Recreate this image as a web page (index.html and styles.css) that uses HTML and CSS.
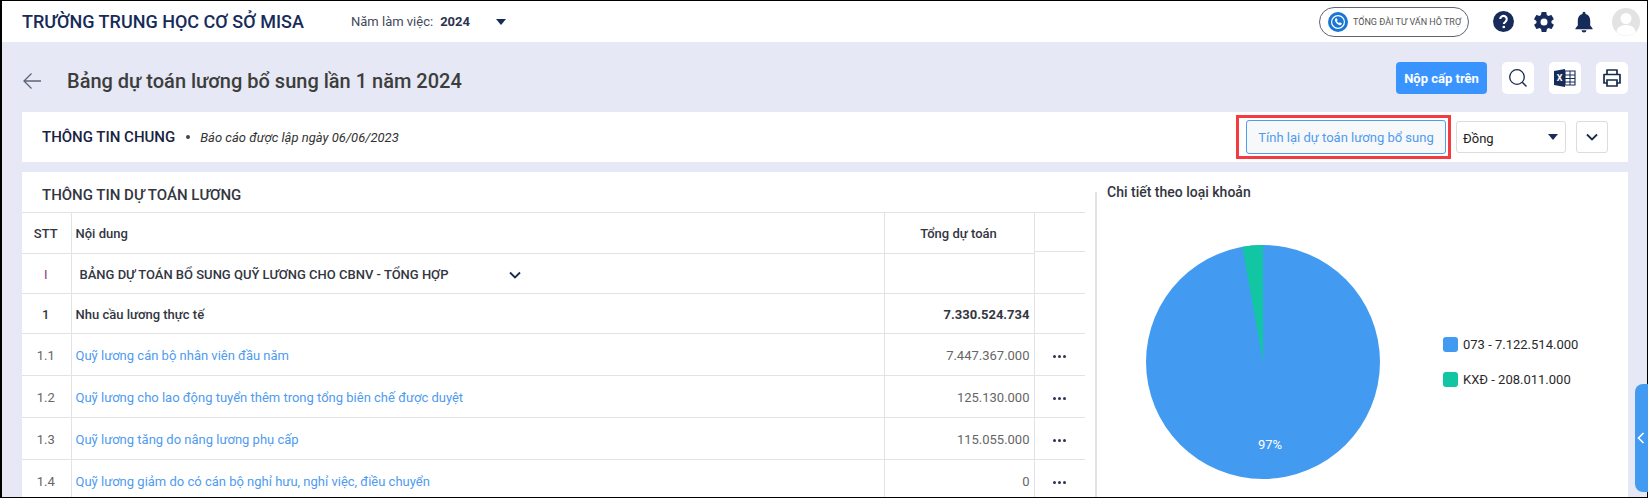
FILE: index.html
```html
<!DOCTYPE html>
<html lang="vi">
<head>
<meta charset="utf-8">
<title>Bảng dự toán lương bổ sung</title>
<link rel="stylesheet" href="styles.css">
</head>
<body>
<div class="frame">
  <header class="topbar">
    <div class="school">TRƯỜNG TRUNG HỌC CƠ SỞ MISA</div>
    <div class="year"><span class="year-label">Năm làm việc:</span><b class="year-value">2024</b><span class="caret year-caret"></span></div>
    <div class="top-actions">
      <div class="hotline">
        <svg class="hotline-icon" viewBox="0 0 20 20" width="20" height="20"><circle cx="10" cy="10" r="10" fill="#1976d2"/><circle cx="10" cy="10" r="7" fill="#fff"/><circle cx="10" cy="10" r="5.800" fill="#1976d2"/><path d="M7.500 6.600l1.200-.4 1 2-.8.7c.4 1 1.100 1.700 2.100 2.200l.8-.8 2 1-.4 1.300c-.2.600-.9.800-1.500.7-2.500-.5-4.500-2.500-5-5-.1-.7.100-1.400.600-1.700z" fill="#fff"/></svg>
        <span>TỔNG ĐÀI TƯ VẤN HỖ TRỢ</span>
      </div>
      <svg class="ic-help" viewBox="0 0 22 22" width="21" height="21"><circle cx="11" cy="11" r="11" fill="#172b5a"/><path d="M7.600 8.500a3.400 3.400 0 1 1 5.300 2.800c-1.100.7-1.500 1.200-1.500 2.300" fill="none" stroke="#fff" stroke-width="2.200"/><circle cx="11.300" cy="16.800" r="1.400" fill="#fff"/></svg>
      <svg class="ic-gear" viewBox="0 0 24 24" width="24" height="24"><path fill="#172b5a" fill-rule="evenodd" d="M19.400 13c.1-.3.100-.7.100-1s0-.7-.1-1l2.100-1.600c.2-.2.300-.4.100-.6l-2-3.500c-.1-.2-.4-.3-.6-.2l-2.500 1c-.5-.4-1.100-.7-1.700-1l-.4-2.600c0-.3-.2-.4-.5-.4h-4c-.3 0-.5.200-.5.400l-.4 2.600c-.6.300-1.200.6-1.700 1l-2.500-1c-.2-.1-.5 0-.6.200l-2 3.500c-.1.200-.1.500.1.600L4.500 11c0 .3-.1.700-.1 1s0 .7.100 1l-2.100 1.600c-.2.200-.3.400-.1.600l2 3.500c.1.200.4.300.6.200l2.500-1c.5.400 1.100.7 1.700 1l.4 2.600c0 .3.200.4.500.4h4c.3 0 .5-.2.500-.4l.4-2.600c.6-.3 1.200-.6 1.700-1l2.500 1c.2.100.5 0 .6-.2l2-3.500c.1-.2.100-.5-.1-.6zM12 15.500a3.500 3.500 0 1 1 0-7 3.500 3.500 0 0 1 0 7z"/></svg>
      <svg class="ic-bell" viewBox="0 0 24 24" width="24" height="24"><path fill="#172b5a" d="M12 22.500a2.500 2.500 0 0 0 2.500-2.300h-5a2.500 2.500 0 0 0 2.500 2.300zm8.500-4.300-2.300-2.600v-5c0-3.300-1.700-5.900-4.700-6.600v-.8a1.500 1.500 0 0 0-3 0v.8c-3 .7-4.700 3.300-4.700 6.600v5l-2.300 2.600v1h17z"/></svg>
      <svg class="avatar" viewBox="0 0 28 28" width="28" height="28"><circle cx="14" cy="14" r="14" fill="#e3e3e3"/><circle cx="14" cy="10.500" r="5.500" fill="#fff"/><path d="M4.500 24c.6-5 4.500-7 9.500-7s8.900 2 9.500 7a14 14 0 0 1-19 0z" fill="#fff"/></svg>
    </div>
  </header>

  <main class="page">
    <div class="page-head">
      <svg class="back" viewBox="0 0 20 18" width="20" height="18"><path d="M19 9H2M9.500 1.500 2 9l7.500 7.500" fill="none" stroke="#5d6478" stroke-width="1.300"/></svg>
      <h1 class="page-title">Bảng dự toán lương bổ sung lần 1 năm 2024</h1>
      <div class="head-actions">
        <button class="btn-primary">Nộp cấp trên</button>
        <div class="icon-btn"><svg viewBox="0 0 20 20" width="20" height="20"><circle cx="9" cy="9" r="7.300" fill="none" stroke="#172b4d" stroke-width="1.300"/><path d="M14.300 14.300 18.500 18.500" stroke="#172b4d" stroke-width="1.500"/></svg></div>
        <div class="icon-btn"><svg viewBox="0 0 22 18" width="22" height="18"><path d="M0 2l11-2v18L0 16z" fill="#172b5a"/><path d="M11 2h10v14H11z" fill="none" stroke="#172b5a" stroke-width="1.100"/><path d="M11 6h10M11 9.500h10M11 13h10M16 2v14" stroke="#172b5a" stroke-width="1"/><text x="5.500" y="12" class="xl">X</text></svg></div>
        <div class="icon-btn"><svg viewBox="0 0 20 20" width="20" height="20"><path d="M5 6V2h10v4M5 15H2V6.500h16V15h-3" fill="none" stroke="#172b4d" stroke-width="1.700" stroke-linejoin="round"/><path d="M5 12h10v6H5z" fill="none" stroke="#172b4d" stroke-width="1.700"/></svg></div>
      </div>
    </div>

    <section class="info-card">
      <span class="info-title">THÔNG TIN CHUNG</span>
      <span class="dot"></span>
      <span class="info-note">Báo cáo được lập ngày 06/06/2023</span>
      <div class="info-actions">
        <div class="highlight"><button class="btn-outline">Tính lại dự toán lương bổ sung</button></div>
        <div class="select"><span class="select-text">Đồng</span><span class="caret"></span></div>
        <div class="collapse"><svg viewBox="0 0 12 8" width="12" height="8"><path d="M1 1.500 6 6.500l5-5" fill="none" stroke="#172b4d" stroke-width="1.800"/></svg></div>
      </div>
    </section>

    <section class="main-card">
      <div class="table-side">
        <h2 class="table-title">THÔNG TIN DỰ TOÁN LƯƠNG</h2>
        <table class="grid">
          <colgroup><col class="c-stt"><col><col class="c-total"><col class="c-more"></colgroup>
          <thead>
            <tr class="r-head"><th class="center">STT</th><th class="left">Nội dung</th><th class="center">Tổng dự toán</th><th class="more-head"><div class="more-head-line"></div></th></tr>
          </thead>
          <tbody>
            <tr class="r-group"><td class="center roman">I</td><td><div class="group-cell"><span>BẢNG DỰ TOÁN BỔ SUNG QUỸ LƯƠNG CHO CBNV - TỔNG HỢP</span><svg viewBox="0 0 12 8" width="12" height="8"><path d="M1 1.500 6 6.500l5-5" fill="none" stroke="#172b4d" stroke-width="1.800"/></svg></div></td><td></td><td class="no-top"></td></tr>
            <tr class="r-bold"><td class="center">1</td><td>Nhu cầu lương thực tế</td><td class="num">7.330.524.734</td><td></td></tr>
            <tr class="r-item"><td class="center">1.1</td><td class="link">Quỹ lương cán bộ nhân viên đầu năm</td><td class="num">7.447.367.000</td><td class="more"><i></i><i></i><i></i></td></tr>
            <tr class="r-item"><td class="center">1.2</td><td class="link">Quỹ lương cho lao động tuyển thêm trong tổng biên chế được duyệt</td><td class="num">125.130.000</td><td class="more"><i></i><i></i><i></i></td></tr>
            <tr class="r-item"><td class="center">1.3</td><td class="link">Quỹ lương tăng do nâng lương phụ cấp</td><td class="num">115.055.000</td><td class="more"><i></i><i></i><i></i></td></tr>
            <tr class="r-item"><td class="center">1.4</td><td class="link">Quỹ lương giảm do có cán bộ nghỉ hưu, nghỉ việc, điều chuyển</td><td class="num">0</td><td class="more"><i></i><i></i><i></i></td></tr>
          </tbody>
        </table>
      </div>
      <aside class="chart-side">
        <h3 class="chart-title">Chi tiết theo loại khoản</h3>
        <div class="chart-body">
          <svg class="pie" viewBox="0 0 234 234" width="234" height="234">
            <circle cx="117" cy="117" r="117" fill="#429bf0"/>
            <path d="M117 117 96.300 1.800A117 117 0 0 1 117 0z" fill="#12c6a3"/>
            <text x="124" y="204" class="pie-label">97%</text>
          </svg>
          <ul class="legend">
            <li><span class="sw sw-blue"></span>073 - 7.122.514.000</li>
            <li><span class="sw sw-green"></span>KXĐ - 208.011.000</li>
          </ul>
        </div>
      </aside>
    </section>
  </main>
  <div class="side-tab"><svg viewBox="0 0 8 12" width="8" height="12"><path d="M6.500 1 1.500 6l5 5" fill="none" stroke="#fff" stroke-width="1.600"/></svg></div>
</div>
</body>
</html>
```
FILE: styles.css
```css
* { box-sizing: border-box; }
html, body { margin: 0; padding: 0; height: 100%; overflow: hidden; background: #fff; }
body { font-family: Roboto, "Liberation Sans", sans-serif; color: #3a3a3a; font-size: 13px; }
.frame { position: relative; width: 1648px; height: 498px; border: solid #000; border-width: 1px 1px 1px 2px; background: #e6e9f5; }

.topbar { height: 41px; background: #fff; display: flex; align-items: center; padding-left: 20px; }
.school { font-size: 18px; font-weight: 500; color: #172b5a; width: 329px; }
.year { display: flex; align-items: center; font-size: 13px; color: #44495a; }
.year-value { margin-left: 7px; color: #2b3350; font-weight: 700; }
.caret { display: inline-block; width: 0; height: 0; border: solid transparent; border-width: 6px 5.500px 0; border-top-color: #172b5a; }
.year-caret { margin-left: 26px; }
.top-actions { margin-left: auto; display: flex; align-items: center; padding-right: 7px; }
.hotline { display: flex; align-items: center; width: 150px; height: 30px; border: 1px solid #5d6478; border-radius: 15px; padding-left: 8px; font-size: 9px; color: #555; white-space: nowrap; }
.hotline-icon { margin-right: 5px; flex: none; }
.ic-help { margin-left: 24px; flex: none; }
.ic-gear { margin-left: 18px; flex: none; }
.ic-bell { margin-left: 16px; flex: none; }
.avatar { margin-left: 16px; flex: none; }

.page { padding: 0 19px 0 20px; }
.page-head { height: 70px; display: flex; align-items: center; }
.back { margin-top: 8px; flex: none; }
.page-title { margin: 8px 0 0 25px; font-size: 20px; font-weight: 500; color: #3d3d3d; }
.head-actions { margin: 2px 0 0 auto; display: flex; gap: 15px; align-items: center; }
.btn-primary { width: 91px; height: 32px; border: 0; border-radius: 4px; background: #3a94ff; color: #fff; font: 700 13px Roboto, sans-serif; padding: 0; }
.icon-btn { width: 32px; height: 32px; border-radius: 5px; background: #fff; display: flex; align-items: center; justify-content: center; }
.xl { fill: #fff; font: 700 9px Roboto, sans-serif; text-anchor: middle; }

.info-card { height: 50px; background: #fff; display: flex; align-items: center; padding-left: 20px; }
.info-title { font-size: 15px; font-weight: 500; color: #17233f; }
.dot { width: 4px; height: 4px; background: #445; border-radius: 50%; margin: 0 10px 0 11px; }
.info-note { font-size: 13px; font-style: italic; color: #333; }
.info-actions { margin-left: auto; display: flex; align-items: center; padding-right: 20px; }
.highlight { border: 3px solid #f43c40; padding: 2px 2px 2px 7px; }
.btn-outline { display: block; width: 200px; height: 34px; background: #f7f8fa; border: 1px solid #4f9bef; border-radius: 3px; color: #4f9bef; font: 400 13px Roboto, sans-serif; padding: 0; }
.select { width: 110px; height: 32px; border: 1px solid #dcdcdc; border-radius: 3px; margin-left: 5px; display: flex; align-items: center; justify-content: space-between; padding: 0 7px 0 6px; font-size: 13px; color: #222; background: #fff; }
.select-text { padding-top: 2px; }
.collapse { width: 32px; height: 32px; border: 1px solid #dcdcdc; border-radius: 3px; margin-left: 10px; display: flex; align-items: center; justify-content: center; }

.main-card { margin-top: 10px; height: 325px; background: #fff; display: flex; overflow: hidden; }
.table-side { width: 1063px; flex: none; }
.table-title { margin: 0; height: 40px; padding: 14px 0 0 20px; font-size: 15px; font-weight: 500; color: #33363f; line-height: 18px; }
.grid { width: 100%; table-layout: fixed; border-collapse: collapse; font-size: 13px; }
.c-stt { width: 49px; }
.c-total { width: 150px; }
.c-more { width: 51px; }
.grid th, .grid td { border: 1px solid #e3e3e6; padding: 2px 5px 0 4px; white-space: nowrap; overflow: hidden; }
.grid tr > :first-child { border-left: 0; }
.grid tr > :last-child { border-right: 0; }
.grid tr:last-child td { border-bottom: 0; }
.r-head th { height: 41px; padding-top: 0; font-size: 13px; font-weight: 500; color: #33363f; }
.grid .more-head { padding: 0; border-bottom: 0; vertical-align: top; }
.more-head-line { height: 39px; border-bottom: 1px solid #e3e3e6; }
.grid .no-top { border-top: 0; }
.r-group td { height: 40px; }
.r-bold td { height: 40px; font-weight: 500; color: #33363f; }
.r-item td { height: 42px; color: #666; }
.center { text-align: center; }
.left { text-align: left; }
.roman { color: #8a3a6a; }
.group-cell { display: flex; align-items: center; font-size: 13px; font-weight: 500; color: #33363f; padding-left: 4px; }
.group-cell svg { margin-left: 61px; flex: none; }
.grid td.link { color: #4f9bef; }
.grid td.num { text-align: right; padding-right: 4px; }
.r-bold .num { font-weight: 700; font-size: 13px; }
.more { text-align: center; }
.more i { display: inline-block; width: 3px; height: 3px; border-radius: 50%; background: #2b3350; margin: 0 1px; vertical-align: middle; }

.chart-side { flex: 1; margin-left: 10px; margin-top: 20px; border-left: 2px solid #e3e3e6; padding-left: 10px; }
.chart-title { margin: -9px 0 0; font-size: 14px; font-weight: 500; color: #33363f; line-height: 18px; }
.chart-body { display: flex; }
.pie { margin: 44px 0 0 39px; flex: none; }
.pie-label { fill: #fff; font: 400 13px Roboto, sans-serif; text-anchor: middle; }
.legend { list-style: none; margin: 136px 0 0 63px; padding: 0; font-size: 13px; color: #2a2a2a; }
.legend li { display: flex; align-items: center; height: 15px; margin-bottom: 20px; white-space: nowrap; }
.sw { width: 15px; height: 15px; border-radius: 3px; margin-right: 5px; flex: none; }
.sw-blue { background: #429bf0; }
.sw-green { background: #12c6a3; }

.side-tab { position: absolute; right: -1px; top: 383px; width: 13px; height: 108px; background: #429bf0; border-radius: 8px 0 0 8px; display: flex; align-items: center; padding-left: 2px; }
```
